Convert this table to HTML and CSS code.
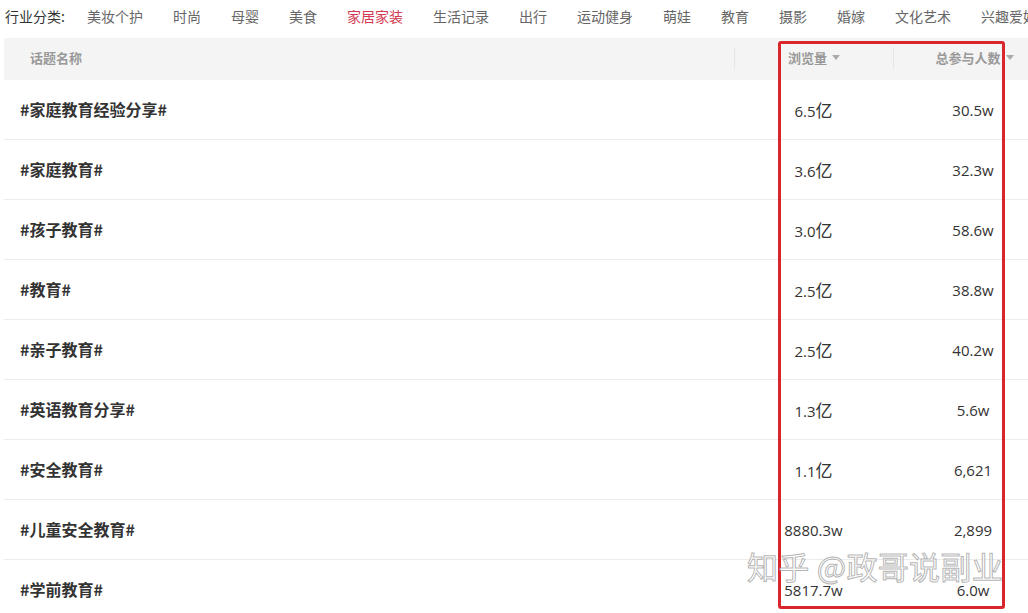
FILE: index.html
```html
<!DOCTYPE html>
<html lang="zh">
<head>
<meta charset="utf-8">
<link rel="stylesheet" href="styles.css">
</head>
<body>
<div class="page">
  <div class="cats">
    <span class="cat-label">行业分类:</span>
    <span class="cat">美妆个护</span>
    <span class="cat">时尚</span>
    <span class="cat">母婴</span>
    <span class="cat">美食</span>
    <span class="cat active">家居家装</span>
    <span class="cat">生活记录</span>
    <span class="cat">出行</span>
    <span class="cat">运动健身</span>
    <span class="cat">萌娃</span>
    <span class="cat">教育</span>
    <span class="cat">摄影</span>
    <span class="cat">婚嫁</span>
    <span class="cat">文化艺术</span>
    <span class="cat">兴趣爱好</span>
  </div>
  <div class="table">
    <div class="thead">
      <div class="c1 th-name">话题名称</div>
      <div class="c2 th-sort"><span>浏览量</span><i class="caret"></i></div>
      <div class="c3 th-sort"><span>总参与人数</span><i class="caret"></i></div>
    </div>
    <div class="row"><div class="c1 name">#家庭教育经验分享#</div><div class="c2 num">6.5<span class="yi">亿</span></div><div class="c3 num">30.5w</div></div>
    <div class="row"><div class="c1 name">#家庭教育#</div><div class="c2 num">3.6<span class="yi">亿</span></div><div class="c3 num">32.3w</div></div>
    <div class="row"><div class="c1 name">#孩子教育#</div><div class="c2 num">3.0<span class="yi">亿</span></div><div class="c3 num">58.6w</div></div>
    <div class="row"><div class="c1 name">#教育#</div><div class="c2 num">2.5<span class="yi">亿</span></div><div class="c3 num">38.8w</div></div>
    <div class="row"><div class="c1 name">#亲子教育#</div><div class="c2 num">2.5<span class="yi">亿</span></div><div class="c3 num">40.2w</div></div>
    <div class="row"><div class="c1 name">#英语教育分享#</div><div class="c2 num">1.3<span class="yi">亿</span></div><div class="c3 num">5.6w</div></div>
    <div class="row"><div class="c1 name">#安全教育#</div><div class="c2 num">1.1<span class="yi">亿</span></div><div class="c3 num">6,621</div></div>
    <div class="row"><div class="c1 name">#儿童安全教育#</div><div class="c2 num">8880.3w</div><div class="c3 num">2,899</div></div>
    <div class="row"><div class="c1 name">#学前教育#</div><div class="c2 num">5817.7w</div><div class="c3 num">6.0w</div></div>
  </div>
  <div class="highlight"></div>
  <div class="watermark">知乎 @政哥说副业</div>
</div>
</body>
</html>
```

FILE: styles.css
```css
html, body {
  margin: 0;
  padding: 0;
  background: #fff;
  overflow: hidden;
}
.page {
  position: relative;
  width: 1028px;
  height: 613px;
  overflow: hidden;
  font-family: "Noto Sans CJK SC", "Microsoft YaHei", sans-serif;
}
.cats {
  display: flex;
  align-items: center;
  height: 32px;
  padding-left: 5px;
  gap: 30px;
  white-space: nowrap;
  font-size: 14px;
  color: #666;
}
.cat-label {
  color: #333;
  width: 52px;
}
.cat.active {
  color: #d23b52;
}
.table {
  margin: 6px 0 0 4px;
  width: 1050px;
}
.thead {
  display: flex;
  align-items: center;
  height: 42px;
  background: #f4f4f4;
  padding-bottom: 3px;
  box-sizing: border-box;
}
.c1 { width: 730px; flex: none; }
.c2 { width: 159px; flex: none; }
.c3 { width: 160px; flex: none; }
.th-name {
  padding-left: 26px;
  box-sizing: border-box;
  font-size: 13px;
  font-weight: 700;
  color: #999;
}
.th-sort {
  display: flex;
  align-items: center;
  justify-content: center;
  gap: 5px;
  height: 22px;
  border-left: 1px solid #e6e6e6;
  box-sizing: border-box;
  font-size: 13px;
  font-weight: 700;
  color: #999;
}
.c3.th-sort { padding-left: 2px; }
.caret {
  width: 0;
  height: 0;
  border-left: 4px solid transparent;
  border-right: 4px solid transparent;
  border-top: 5px solid #aaa;
}
.row {
  display: flex;
  align-items: center;
  height: 59px;
  border-bottom: 1px solid #ececec;
}
.row:last-child { border-bottom: none; }
.name {
  padding-left: 16px;
  box-sizing: border-box;
  font-size: 16px;
  font-weight: 700;
  color: #333;
  margin-top: -1px;
}
.num {
  text-align: center;
  font-family: "Open Sans", "Noto Sans CJK SC", sans-serif;
  font-size: 15px;
  color: #333;
}
.yi {
  font-family: "Noto Sans CJK SC", sans-serif;
  font-size: 17px;
}
.highlight {
  position: absolute;
  left: 778px;
  top: 41px;
  width: 227px;
  height: 568px;
  box-sizing: border-box;
  border: 3px solid #d9262c;
  border-radius: 3px;
}
.watermark {
  position: absolute;
  left: 747px;
  top: 546px;
  font-size: 31px;
  line-height: 40px;
  white-space: nowrap;
  color: rgba(255, 255, 255, 0.85);
  -webkit-text-stroke: 1px rgba(130, 130, 130, 0.6);
  letter-spacing: 0.3px;
}
```
